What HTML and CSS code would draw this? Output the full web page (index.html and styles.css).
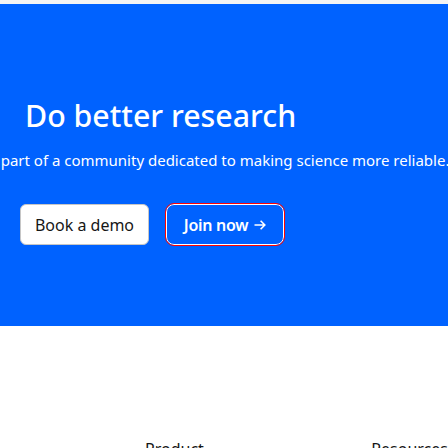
FILE: index.html
```html
<!DOCTYPE html>
<html>
<head>
<meta charset="utf-8">
<link rel="stylesheet" href="styles.css">
</head>
<body>
<div class="topbar"></div>
<section class="hero">
  <h1 class="title">Do better research</h1>
  <div class="subline"><p class="subtitle">Be part of a community dedicated to making science more reliable.</p></div>
  <div class="actions">
    <a class="btn btn-light">Book a demo</a>
    <a class="btn btn-outline">Join now <svg class="arrow" width="12" height="10" viewBox="0 0 12 10"><path d="M0.5 5 H10.8 M6.6 0.8 L10.8 5 L6.6 9.2" fill="none" stroke="#ffffff" stroke-width="1.6"/></svg></a>
  </div>
</section>
<footer class="footer">
  <div class="col col-product">Product</div>
  <div class="col col-resources">Resources</div>
</footer>
</body>
</html>
```
FILE: styles.css
```css
html, body {
  margin: 0;
  padding: 0;
  overflow: hidden;
}
body {
  font-family: "Noto Sans", "Liberation Sans", sans-serif;
  background: #ffffff;
  width: 448px;
}
.topbar {
  height: 4px;
  background: #f4f4f4;
}
.hero {
  background: #0062ff;
  height: 322px;
  box-sizing: border-box;
  padding: 92px 20px 0 20px;
  color: #ffffff;
  overflow: hidden;
}
.title {
  margin: 0 0 0 5px;
  font-size: 30.3px;
  line-height: 40px;
  font-weight: 500;
  letter-spacing: 0;
}
.subline {
  display: flex;
  justify-content: center;
  margin: 12px -20px 0 -40px;
}
.subtitle {
  margin: 0;
  white-space: nowrap;
  font-size: 15px;
  line-height: 24px;
  flex-shrink: 0;
}
.actions {
  display: flex;
  gap: 17px;
  margin-top: 32px;
}
.btn {
  box-sizing: border-box;
  height: 41px;
  display: flex;
  align-items: center;
  justify-content: center;
  border-radius: 6px;
  font-size: 16px;
}
.btn-light {
  width: 129px;
  background: #ffffff;
  color: #161616;
  border: 1px solid #c6c6c6;
  font-size: 16px;
}
.btn-outline {
  width: 118px;
  background: #0062ff;
  color: #ffffff;
  border: 1px solid #ffffff;
  border-radius: 8px;
  font-weight: 600;
  font-size: 16px;
  letter-spacing: -0.3px;
  outline: 1px solid #ff0000;
  outline-offset: 0;
  gap: 6px;
  padding-top: 1px;
}
.arrow {
  display: block;
}
.footer {
  display: flex;
  padding: 111px 0 0 0;
  color: #161616;
  font-size: 16px;
  line-height: 24px;
}
.col-product {
  margin-left: 145px;
  width: 227px;
}
```
